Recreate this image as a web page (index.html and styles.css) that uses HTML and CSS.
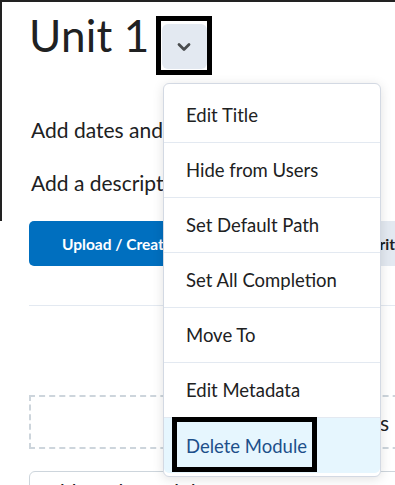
FILE: index.html
```html
<!DOCTYPE html>
<html>
<head>
<meta charset="utf-8">
<link rel="stylesheet" href="styles.css">
</head>
<body>
<div class="page">
  <div class="frame">
    <div class="title-row">
      <h1 class="title">Unit 1</h1>
      <div class="chev-wrap">
        <button class="chev-btn" aria-label="Actions">
          <svg width="14" height="10" viewBox="0 0 14 10"><path d="M2 2.5 L7 7.5 L12 2.5" fill="none" stroke="#494c4e" stroke-width="2.8" stroke-linecap="round" stroke-linejoin="round"/></svg>
        </button>
        <span class="mark mark-chev"></span>
      </div>
    </div>
    <p class="line line-1">Add dates and restrictions...</p>
    <p class="line line-2">Add a description...</p>
  </div>
  <div class="content">
    <div class="btn-row">
      <button class="btn primary">Upload / Create</button>
      <button class="btn secondary">Write</button>
    </div>
    <div class="rule"></div>
    <div class="drop">Drag and drop files</div>
    <div class="sub-input">Add a sub-module</div>
  </div>

  <ul class="menu">
    <li class="item">Edit Title</li>
    <li class="item">Hide from Users</li>
    <li class="item">Set Default Path</li>
    <li class="item">Set All Completion</li>
    <li class="item">Move To</li>
    <li class="item">Edit Metadata</li>
    <li class="item active">Delete Module<span class="mark mark-delete"></span></li>
  </ul>
</div>
</body>
</html>
```

FILE: styles.css
```css
* { box-sizing: border-box; }
html, body {
  margin: 0;
  padding: 0;
  width: 395px;
  height: 485px;
  overflow: hidden;
  background: #fff;
  font-family: Lato, "Noto Sans", sans-serif;
  color: #202122;
}
.page {
  position: relative;
  width: 395px;
  height: 485px;
  overflow: hidden;
}
.frame {
  height: 221px;
  border-top: 2px solid #222;
  border-left: 2px solid #222;
  padding: 0 0 0 27px;
}
.title-row {
  display: flex;
  align-items: flex-start;
  padding-top: 7px;
}
.title {
  margin: 0;
  font-size: 44px;
  font-weight: 400;
  line-height: 52px;
  letter-spacing: 0.2px;
}
.chev-wrap {
  position: relative;
  margin-left: 12px;
  margin-top: 15px;
}
.chev-btn {
  display: flex;
  align-items: center;
  justify-content: center;
  width: 45px;
  height: 45px;
  border: none;
  border-radius: 6px;
  background: #e3e9f1;
  padding: 0;
}
.mark {
  position: absolute;
  border: 5px solid #000;
  pointer-events: none;
}
.mark-chev {
  left: -6px;
  top: -8px;
  width: 56px;
  height: 59px;
}
.line {
  margin: 0;
  font-size: 21px;
  line-height: 26px;
  padding-left: 2px;
  white-space: nowrap;
}
.line-1 { margin-top: 48px; }
.line-2 { margin-top: 27px; }
.content {
  padding-left: 29px;
}
.btn-row {
  display: flex;
  gap: 10px;
  height: 45px;
}
.btn {
  height: 45px;
  border: none;
  border-radius: 5px;
  font-family: Lato, "Noto Sans", sans-serif;
  font-size: 15.5px;
  font-weight: 700;
  text-align: left;
  white-space: nowrap;
  flex: none;
}
.primary {
  width: 200px;
  background: #006fbf;
  color: #fff;
  padding-left: 33px;
}
.secondary {
  width: 200px;
  background: #e3e9f1;
  color: #202122;
  padding-left: 125px;
}
.rule {
  height: 1px;
  background: #e3e9f1;
  margin-top: 39px;
}
.drop {
  margin-top: 89px;
  width: 400px;
  height: 54px;
  border: 2px dashed #cdd5dc;
  font-size: 21px;
  display: flex;
  align-items: center;
  justify-content: flex-end;
  padding-right: 38px;
  white-space: nowrap;
  overflow: hidden;
}
.sub-input {
  margin-top: 22px;
  width: 400px;
  height: 44px;
  border: 1px solid #cdd5dc;
  border-radius: 6px;
  font-size: 21px;
  padding: 7px 0 0 9px;
}
.menu {
  position: absolute;
  left: 163px;
  top: 83px;
  width: 218px;
  margin: 0;
  padding: 4px 0 3px;
  list-style: none;
  background: #fff;
  border: 1px solid #d3d9e3;
  border-radius: 6px;
  box-shadow: 0 2px 12px rgba(0, 0, 0, 0.12);
}
.item {
  position: relative;
  height: 55px;
  display: flex;
  align-items: center;
  padding-left: 22px;
  font-size: 18.5px;
  border-bottom: 1px solid #e3e9f1;
  color: #202122;
}
.item.active {
  border-bottom: none;
  background: #e6f6fe;
  color: #1d4f8a;
  border-radius: 0 0 5px 5px;
}
.mark-delete {
  left: 8px;
  top: -1px;
  width: 145px;
  height: 55px;
}
```
